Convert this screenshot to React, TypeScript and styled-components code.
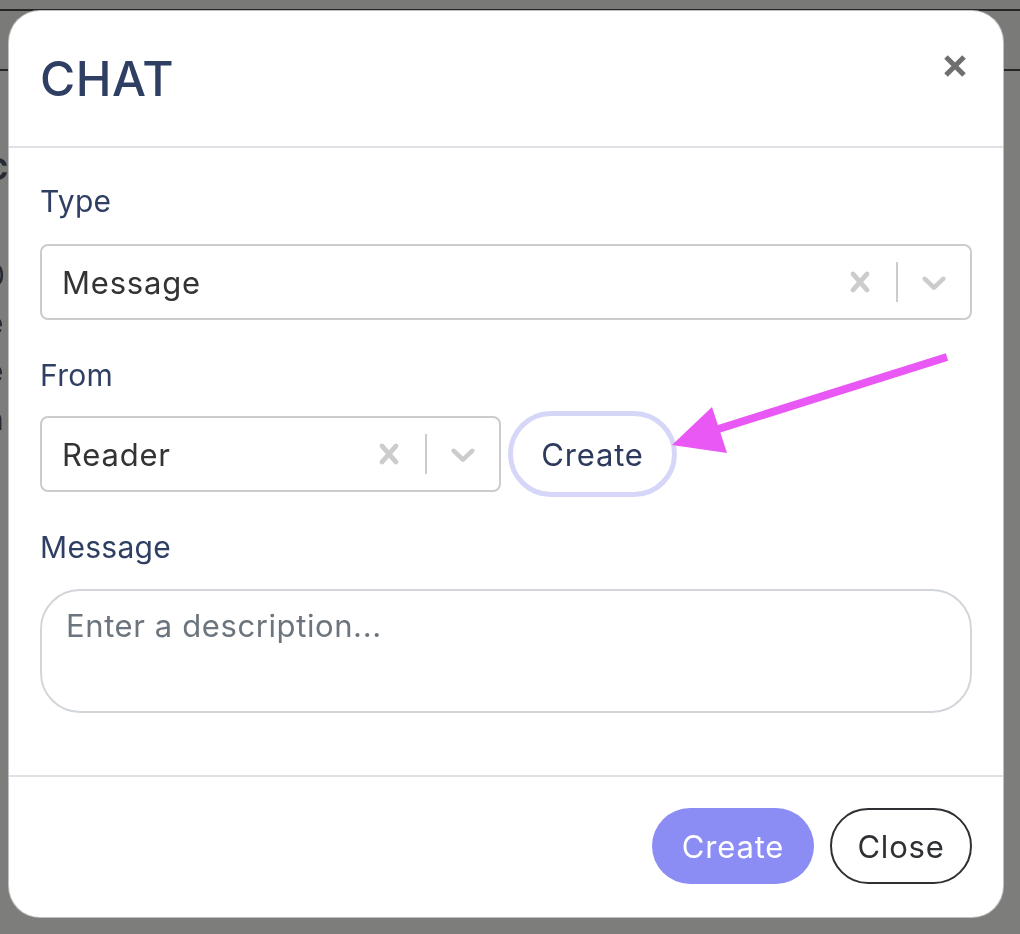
import styled, { createGlobalStyle } from 'styled-components';

const GlobalStyle = createGlobalStyle`
  html, body {
    margin: 0;
    padding: 0;
    background: #7b7b7a;
  }
  * {
    box-sizing: border-box;
  }
`;

const FONT = `Inter, "Noto Sans", sans-serif`;

const CrossIcon = ({ size = 40, color = '#cccccc' }: { size?: number; color?: string }) => (
  <svg width={size} height={size} viewBox="0 0 20 20" fill={color}>
    <path d="M14.348 14.849c-0.469 0.469-1.229 0.469-1.697 0l-2.651-3.030-2.651 3.029c-0.469 0.469-1.229 0.469-1.697 0-0.469-0.469-0.469-1.229 0-1.697l2.758-3.15-2.759-3.152c-0.469-0.469-0.469-1.228 0-1.697s1.228-0.469 1.697 0l2.652 3.031 2.651-3.031c0.469-0.469 1.228-0.469 1.697 0s0.469 1.229 0 1.697l-2.758 3.152 2.758 3.15c0.469 0.469 0.469 1.229 0 1.698z" />
  </svg>
);

const ChevronIcon = () => (
  <svg width={40} height={40} viewBox="0 0 20 20" fill="#cccccc">
    <path d="M4.516 7.548c0.436-0.446 1.043-0.481 1.576 0l3.908 3.747 3.908-3.747c0.533-0.481 1.141-0.446 1.574 0 0.436 0.445 0.408 1.197 0 1.615-0.406 0.418-4.695 4.502-4.695 4.502-0.217 0.223-0.502 0.335-0.787 0.335s-0.57-0.112-0.789-0.335c0 0-4.287-4.084-4.695-4.502s-0.436-1.170 0-1.615z" />
  </svg>
);

type SelectProps = { value: string; width?: string };

const Select = ({ value, width }: SelectProps) => (
  <SelectBox $width={width}>
    <SelectValue>{value}</SelectValue>
    <Indicator>
      <CrossIcon />
    </Indicator>
    <Separator />
    <Indicator>
      <ChevronIcon />
    </Indicator>
  </SelectBox>
);

const App = () => {
  return (
    <>
      <GlobalStyle />
      <Page>
        <BackTop />
        <BackNav />
        <BackText>
          <span>C</span>
          <span>0</span>
          <span>e</span>
          <span>e</span>
          <span>n</span>
        </BackText>
      </Page>

      <Overlay>
        <Modal>
          <Header>
            <Title>CHAT</Title>
            <CloseButton aria-label="close">
              <svg width="24" height="24" viewBox="0 0 24 24">
                <path d="M3 3 L21 21 M21 3 L3 21" stroke="#6f6f6f" strokeWidth="5" />
              </svg>
            </CloseButton>
          </Header>

          <Body>
            <Field>
              <Label>Type</Label>
              <Select value="Message" />
            </Field>

            <Field $top={34} $gap={15}>
              <Label>From</Label>
              <Row>
                <Select value="Reader" width="461px" />
                <OutlineButton>Create</OutlineButton>
              </Row>
            </Field>

            <Field $top={29} $gap={21}>
              <Label>Message</Label>
              <TextArea placeholder="Enter a description..." />
            </Field>
          </Body>

          <Footer>
            <PrimaryButton>Create</PrimaryButton>
            <GhostButton>Close</GhostButton>
          </Footer>
        </Modal>
      </Overlay>

      <Annotation width="1020" height="934" viewBox="0 0 1020 934">
        <line x1="947" y1="357" x2="712" y2="431" stroke="#e957f5" strokeWidth="8" />
        <polygon points="672,445 712,407 727,453" fill="#e957f5" />
      </Annotation>
    </>
  );
};

export default App;

const Page = styled.div`
  position: fixed;
  inset: 0;
  background: #7d7d7c;
`;

const BackTop = styled.div`
  height: 11px;
  background: #797978;
  border-bottom: 2px solid #262626;
`;

const BackNav = styled.div`
  height: 60px;
  background: #7a7a79;
  border-bottom: 2px solid #262626;
  margin-bottom: 32px;
`;

const BackText = styled.div`
  display: flex;
  flex-direction: column;
  gap: 12px;
  margin-left: -14px;
  margin-top: 80px;
  font-family: ${FONT};
  font-size: 30px;
  color: #262a33;

  span:first-child {
    font-weight: 700;
    margin-bottom: 58px;
  }
`;

const Overlay = styled.div`
  position: relative;
  min-height: 934px;
  padding: 10px 0 0 8px;
`;

const Modal = styled.div`
  width: 996px;
  height: 908px;
  background: #fff;
  border: 1px solid rgba(0, 0, 0, 0.25);
  border-radius: 32px;
  display: flex;
  flex-direction: column;
  font-family: ${FONT};
  overflow: hidden;
`;

const Header = styled.div`
  height: 137px;
  flex: none;
  display: flex;
  align-items: center;
  justify-content: space-between;
  padding: 0 31px;
  border-bottom: 2px solid #dee2e6;
`;

const Title = styled.h1`
  margin: 0;
  font-size: 48px;
  font-weight: 500;
  letter-spacing: 0.5px;
  color: #2f3e63;
`;

const CloseButton = styled.button`
  border: none;
  background: none;
  padding: 0;
  margin: 0 5px 26px 0;
  width: 24px;
  height: 24px;
  display: flex;
  cursor: pointer;
`;

const Body = styled.div`
  flex: 1;
  padding: 32px 31px 0;
  display: flex;
  flex-direction: column;
  border-bottom: 2px solid #dee2e6;
`;

const Field = styled.div<{ $gap?: number; $top?: number }>`
  display: flex;
  flex-direction: column;
  margin-top: ${(p) => p.$top ?? 0}px;
  gap: ${(p) => p.$gap ?? 22}px;
`;

const Label = styled.label`
  font-size: 30px;
  line-height: 42px;
  color: #2f3e63;
  letter-spacing: 0.3px;
`;

const Row = styled.div`
  display: flex;
  align-items: center;
  gap: 7px;
`;

const SelectBox = styled.div<{ $width?: string }>`
  width: ${(p) => p.$width ?? '100%'};
  height: 76px;
  border: 2px solid #cccccc;
  border-radius: 8px;
  background: #fff;
  display: flex;
  align-items: center;
`;

const SelectValue = styled.div`
  flex: 1;
  padding-left: 20px;
  font-size: 31px;
  color: #333333;
  letter-spacing: 0.8px;
`;

const Indicator = styled.div`
  width: 72px;
  display: flex;
  justify-content: center;
  align-items: center;
`;

const Separator = styled.span`
  width: 2px;
  height: 40px;
  background: #cccccc;
`;

const OutlineButton = styled.button`
  width: 169px;
  height: 86px;
  padding: 0;
  border: 5px solid #d6d6f9;
  border-radius: 43px;
  background: #fff;
  font-family: ${FONT};
  font-size: 31px;
  letter-spacing: 0.8px;
  color: #2d3a5c;
`;

const TextArea = styled.textarea`
  height: 124px;
  width: 100%;
  resize: none;
  border: 2px solid #d2d6db;
  border-radius: 40px;
  padding: 16px 24px;
  font-family: ${FONT};
  font-size: 31px;
  letter-spacing: 0.6px;
  color: #333;
  outline: none;

  &::placeholder {
    color: #6c757d;
  }
`;

const Footer = styled.div`
  height: 140px;
  flex: none;
  display: flex;
  align-items: center;
  justify-content: flex-end;
  gap: 16px;
  padding: 0 31px 2px;
`;

const PillButton = styled.button`
  height: 76px;
  border-radius: 38px;
  font-family: ${FONT};
  font-size: 31px;
  letter-spacing: 0.8px;
`;

const PrimaryButton = styled(PillButton)`
  width: 162px;
  border: none;
  background: #8b8cf4;
  color: #fff;
`;

const GhostButton = styled(PillButton)`
  width: 142px;
  border: 2px solid #2e3033;
  background: #fff;
  color: #2e3033;
`;

const Annotation = styled.svg`
  position: absolute;
  top: 0;
  left: 0;
  pointer-events: none;
`;
